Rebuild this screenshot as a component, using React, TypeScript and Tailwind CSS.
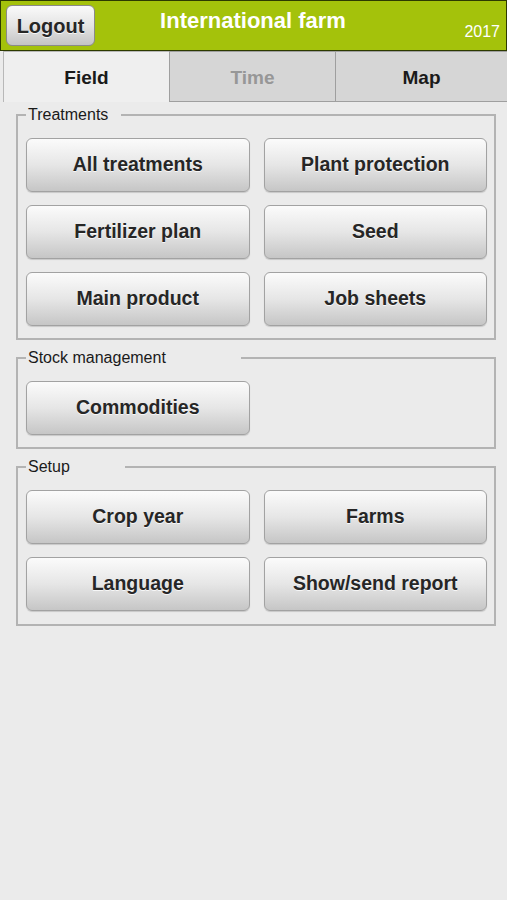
import React from "react";

const Btn = ({ label }: { label: string }) => (
  <button className="h-[54px] w-full rounded-[6px] border border-[#a2a2a2] bg-gradient-to-b from-[#fbfbfb] via-[#e6e6e6] to-[#c6c6c6] text-[19.5px] font-bold text-[#262626] shadow-[0_1px_1px_rgba(0,0,0,0.15)] [text-shadow:0_1px_0_rgba(255,255,255,0.8)]">
    {label}
  </button>
);

const Group = ({
  title,
  legendW,
  className,
  children,
}: {
  title: string;
  legendW: string;
  className: string;
  children: React.ReactNode;
}) => (
  <fieldset
    className={`border-2 border-[#b3b3b3] pl-[8px] pr-[7px] ${className}`}
  >
    <legend className={`pl-[2px] text-[16px] leading-[18px] text-[#1a1a1a] ${legendW}`}>
      {title}
    </legend>
    {children}
  </fieldset>
);

export default function App() {
  return (
    <div
      className="min-h-[900px] w-[507px] bg-[#ebebeb]"
      style={{ fontFamily: '"Liberation Sans", Arial, sans-serif' }}
    >
      {/* Header */}
      <div className="flex h-[51px] items-center border border-[#2d3a00] bg-[#a4c20b] pl-[5px] pr-[6px]">
        <button className="h-[41px] w-[89px] shrink-0 rounded-[6px] border border-[#8a8a8a] bg-gradient-to-b from-[#fafafa] via-[#e4e4e4] to-[#c4c4c4] text-[20px] font-bold text-[#262626] [text-shadow:0_1px_0_rgba(255,255,255,0.8)]">
          Logout
        </button>
        <div className="flex-1 self-start pt-[3px] text-center text-[22px] font-bold text-white">
          International farm
        </div>
        <div className="w-[89px] shrink-0 self-end pb-[6px] text-right text-[16px] text-white">2017</div>
      </div>

      {/* Tabs */}
      <div className="flex h-[51px] pl-[3px]">
        <div className="flex w-[166px] items-center justify-center border-l border-t border-[#b8b8b8] bg-[#efefef] pt-[3px] text-[19px] font-bold text-[#1a1a1a]">
          Field
        </div>
        <div className="flex w-[167px] items-center justify-center border-x border-b border-t border-[#9f9f9f] bg-[#d6d6d6] pt-[3px] text-[19px] font-bold text-[#979797]">
          Time
        </div>
        <div className="flex flex-1 items-center justify-center border-b border-t border-[#9f9f9f] bg-[#d6d6d6] pt-[3px] text-[19px] font-bold text-[#1a1a1a]">
          Map
        </div>
      </div>

      {/* Content */}
      <div className="w-[496px] pl-[16px]">
        <Group title="Treatments" legendW="w-[95px]" className="mt-[4px] pb-[12px] pt-[14px]">
          <div className="grid grid-cols-2 gap-x-[14px] gap-y-[13px]">
            <Btn label="All treatments" />
            <Btn label="Plant protection" />
            <Btn label="Fertilizer plan" />
            <Btn label="Seed" />
            <Btn label="Main product" />
            <Btn label="Job sheets" />
          </div>
        </Group>

        <Group title="Stock management" legendW="w-[215px]" className="mt-[9px] pb-[12px] pt-[14px]">
          <div className="grid grid-cols-2 gap-x-[14px]">
            <Btn label="Commodities" />
          </div>
        </Group>

        <Group title="Setup" legendW="w-[99px]" className="mt-[9px] pb-[13px] pt-[14px]">
          <div className="grid grid-cols-2 gap-x-[14px] gap-y-[13px]">
            <Btn label="Crop year" />
            <Btn label="Farms" />
            <Btn label="Language" />
            <Btn label="Show/send report" />
          </div>
        </Group>
      </div>
    </div>
  );
}
